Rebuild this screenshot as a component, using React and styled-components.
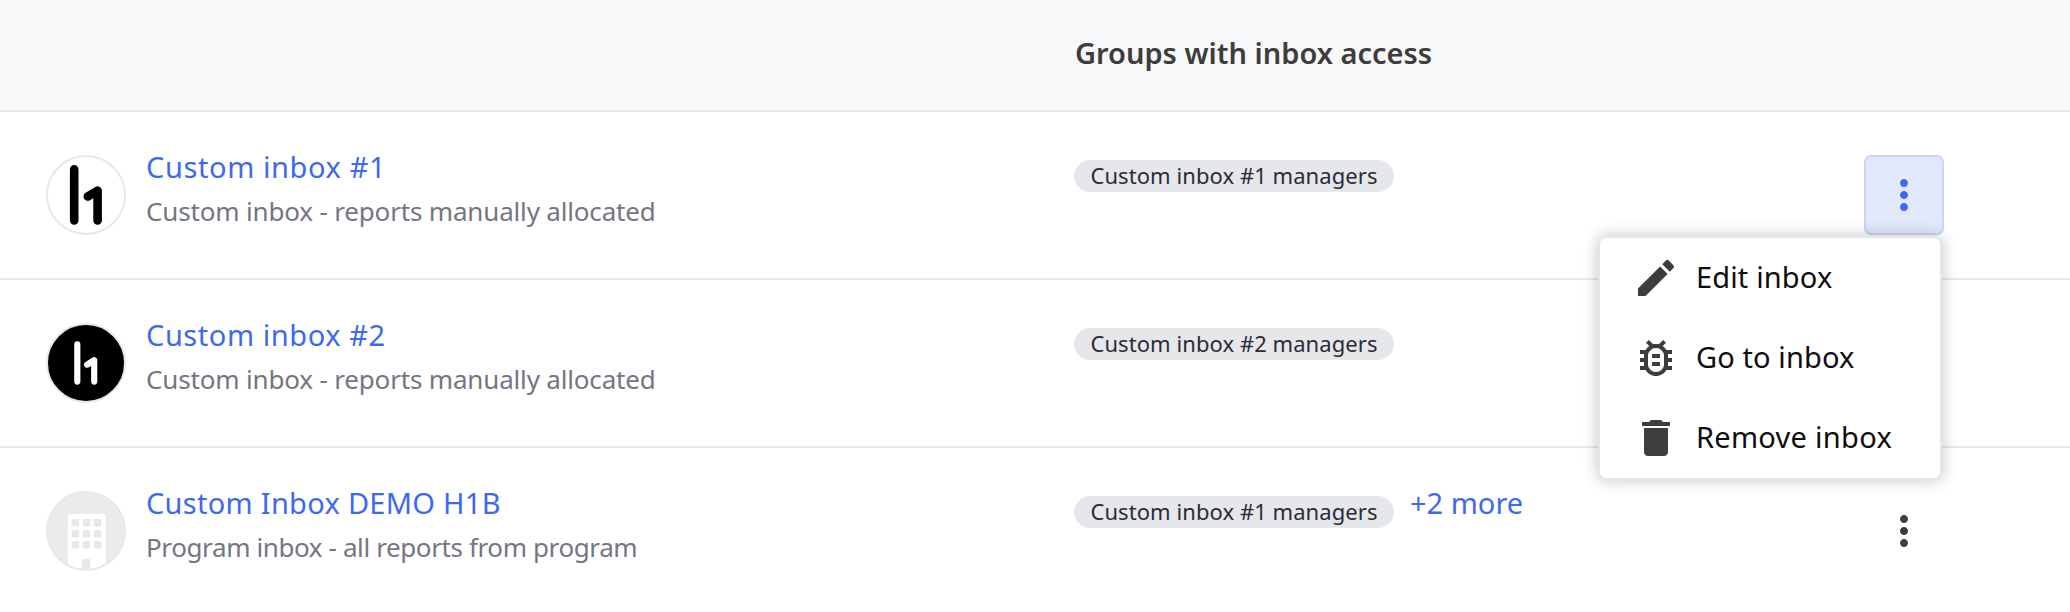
import React from 'react';
import styled, { createGlobalStyle, css } from 'styled-components';
import {
  MdMoreVert,
  MdEdit,
  MdOutlineBugReport,
  MdDelete,
} from 'react-icons/md';

const GlobalStyle = createGlobalStyle`
  *, *::before, *::after { box-sizing: border-box; }
  body {
    margin: 0;
    background: #fff;
    overflow: hidden;
    font-family: 'Noto Sans', 'Open Sans', sans-serif;
    font-size: 29px;
    line-height: 40px;
  }
`;

const Page = styled.div`
  height: 612px;
  overflow: hidden;
`;

const rowGrid = css`
  display: grid;
  grid-template-columns: 1074px 790px 1fr;
  border-bottom: 2px solid #e8e8e9;
`;

const HeaderRow = styled.header`
  ${rowGrid}
  height: 112px;
  padding-top: 33px;
  background: #f7f8fa;
`;

const HeaderCell = styled.div`
  grid-column: 2;
  padding-left: 1px;
  font-weight: 600;
  color: #3d3d3d;
`;

const Row = styled.section`
  ${rowGrid}
  height: 168px;
`;

const InboxCell = styled.div`
  display: flex;
  gap: 20px;
  padding: 35px 0 0 46px;
`;

const Avatar = styled.div`
  width: 80px;
  height: 80px;
  margin-top: 8px;
  border: 2px solid #e8e8e8;
  border-radius: 50%;
  overflow: hidden;
  background: ${(p) => p.$fill};

  svg { display: block; }
`;

const InboxLink = styled.a`
  display: block;
  color: #3e69ef;
  white-space: nowrap;
  letter-spacing: ${(p) => p.$spacing || 0}px;
`;

const Description = styled.div`
  margin-top: 2px;
  font-size: 26px;
  line-height: 44px;
  color: #747682;
  white-space: nowrap;
  letter-spacing: ${(p) => p.$spacing || 0}px;
`;

const GroupsCell = styled.div`
  display: flex;
  align-items: flex-start;
  gap: 16px;
  padding-top: 35px;
`;

const Chip = styled.span`
  width: 320px;
  height: 32px;
  margin-top: 13px;
  border-radius: 16px;
  background: #e6e7eb;
  color: #2b2c35;
  font-size: 22px;
  line-height: 30px;
  letter-spacing: 0.06px;
  text-align: center;
  white-space: nowrap;
`;

const ActionsCell = styled.div`
  position: relative;
  padding-top: 43px;
`;

const MoreButton = styled.button`
  display: flex;
  align-items: center;
  justify-content: center;
  width: 80px;
  height: 80px;
  padding: 0;
  border: 2px solid ${(p) => (p.$active ? '#c7d6fb' : 'transparent')};
  border-radius: 7px;
  background: ${(p) => (p.$active ? '#e2e8fb' : 'transparent')};
  color: ${(p) => (p.$active ? '#3e69ef' : '#393c44')};
  font-size: 48px;
`;

const Menu = styled.div`
  position: absolute;
  z-index: 2;
  top: 124px;
  right: calc(100% - 78px);
  width: 344px;
  padding: 0;
  border: 2px solid #e6e6e6;
  border-radius: 8px;
  background: #fff;
  box-shadow: 0 0 16px rgba(0, 0, 0, 0.24);
`;

const MenuItem = styled.div`
  display: flex;
  align-items: center;
  gap: 16px;
  height: 80px;
  padding-left: 32px;
  color: #0e0e10;
  white-space: nowrap;
  letter-spacing: ${(p) => p.$spacing}px;

  svg { flex: none; width: 48px; height: 48px; color: #3d3d3d; }
`;

const MenuLabel = styled.span`
  padding-bottom: 2px;
`;

const HOneDark = () => (
  <svg width="76" height="76" viewBox="2 2 76 76" fill="none" stroke="#000" strokeWidth="8.6" strokeLinecap="round" strokeLinejoin="round">
    <path d="M28.2 14.4V65.4M41.8 41.5L51.6 35.6V65.4" />
  </svg>
);

const HOneLight = () => (
  <svg width="76" height="76" viewBox="2 2 76 76" fill="none" stroke="#fff" strokeWidth="6.2" strokeLinecap="round" strokeLinejoin="round">
    <path d="M31.3 21.4V58.6M41.2 41.6L48.2 37.2V58.6" />
  </svg>
);

const Building = () => (
  <svg width="76" height="76" viewBox="2 2 76 76">
    <path d="M21.3 80V24.5Q21.3 22.4 23.4 22.4H57.8Q60 22.4 60 24.5V80Z" fill="#fff" stroke="#e0e0e0" strokeWidth="0.5" />
    {[28.4, 39.5, 50.6].map((y) =>
      [26.2, 37.3, 48.3].map((x) => (
        <rect key={`${x}-${y}`} x={x} y={y} width="6.5" height="6.5" rx="0.8" fill="#e8e8e8" stroke="#dddddd" strokeWidth="0.6" />
      ))
    )}
    <path d="M36.3 80V69.5Q36.3 68.4 37.4 68.4H42.6Q43.7 68.4 43.7 69.5V80Z" fill="#e8e8e8" stroke="#dddddd" strokeWidth="0.6" />
  </svg>
);

const inboxes = [
  {
    name: 'Custom inbox #1',
    nameSpacing: 0.6,
    description: 'Custom inbox - reports manually allocated',
    descriptionSpacing: -0.17,
    fill: '#fff',
    Logo: HOneDark,
    group: 'Custom inbox #1 managers',
    menuOpen: true,
  },
  {
    name: 'Custom inbox #2',
    nameSpacing: 0.56,
    description: 'Custom inbox - reports manually allocated',
    descriptionSpacing: -0.17,
    fill: '#000',
    Logo: HOneLight,
    group: 'Custom inbox #2 managers',
  },
  {
    name: 'Custom Inbox DEMO H1B',
    nameSpacing: 0.28,
    description: 'Program inbox - all reports from program',
    descriptionSpacing: -0.39,
    fill: '#ebebeb',
    Logo: Building,
    group: 'Custom inbox #1 managers',
    more: '+2 more',
  },
];

const menuItems = [
  { label: 'Edit inbox', Icon: MdEdit, spacing: 0.14 },
  { label: 'Go to inbox', Icon: MdOutlineBugReport, spacing: 0.1 },
  { label: 'Remove inbox', Icon: MdDelete, spacing: 0.28 },
];

function InboxRow({ inbox }) {
  const { Logo } = inbox;
  const showButton = inbox.menuOpen || inbox.more;
  return (
    <Row>
      <InboxCell>
        <Avatar $fill={inbox.fill}>
          <Logo />
        </Avatar>
        <div>
          <InboxLink $spacing={inbox.nameSpacing}>{inbox.name}</InboxLink>
          <Description $spacing={inbox.descriptionSpacing}>{inbox.description}</Description>
        </div>
      </InboxCell>
      <GroupsCell>
        <Chip>{inbox.group}</Chip>
        {inbox.more && <InboxLink>{inbox.more}</InboxLink>}
      </GroupsCell>
      <ActionsCell>
        {showButton && (
          <MoreButton $active={inbox.menuOpen} aria-label="More actions">
            <MdMoreVert />
          </MoreButton>
        )}
        {inbox.menuOpen && (
          <Menu role="menu">
            {menuItems.map(({ label, Icon, spacing }) => (
              <MenuItem key={label} role="menuitem" $spacing={spacing}>
                <Icon />
                <MenuLabel>{label}</MenuLabel>
              </MenuItem>
            ))}
          </Menu>
        )}
      </ActionsCell>
    </Row>
  );
}

export default function App() {
  return (
    <Page>
      <GlobalStyle />
      <HeaderRow>
        <HeaderCell>Groups with inbox access</HeaderCell>
      </HeaderRow>
      {inboxes.map((inbox) => (
        <InboxRow key={inbox.name} inbox={inbox} />
      ))}
    </Page>
  );
}
